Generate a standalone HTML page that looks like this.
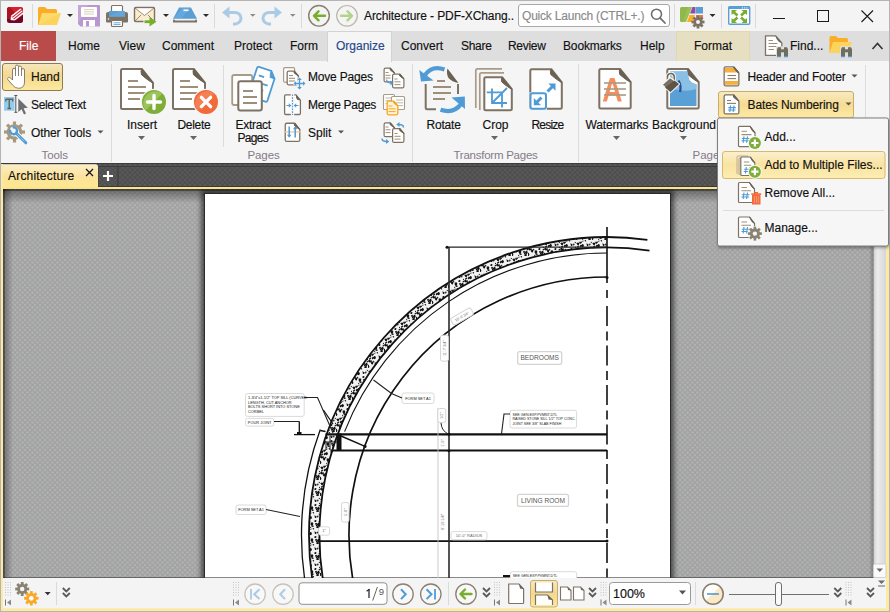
<!DOCTYPE html>
<html><head><meta charset="utf-8">
<style>
*{box-sizing:border-box;margin:0;padding:0}
html,body{width:890px;height:612px;overflow:hidden;background:#f4f4f4}
body{position:relative;font-family:"Liberation Sans",sans-serif;font-size:12px;color:#111}
.a{position:absolute}
.t{position:absolute;white-space:nowrap;line-height:14px;-webkit-text-stroke:0.15px currentColor}
.lbl{color:#837b88;font-size:11.5px;-webkit-text-stroke:0}
</style></head>
<body>
<div class="a" style="left:0;top:0;width:890px;height:31px;background:#f4f4f4"></div>
<div class="a" style="left:0;top:31px;width:890px;height:30px;background:#dedede"></div>
<div class="a" style="left:0;top:61px;width:890px;height:102px;background:#f5f5f5"></div>
<div class="a" style="left:1px;top:31px;width:55px;height:30px;background:#b94c4a"></div>
<div class="a" style="left:327px;top:31px;width:65px;height:31px;background:#f5f5f5;border-radius:2px 2px 0 0;border:1px solid #d2d2d2;border-bottom:none"></div>
<div class="a" style="left:676px;top:31px;width:74px;height:30px;background:#e6dfc2;border:1px solid #e2d8ab;border-bottom:none"></div>
<div class="a" style="left:518px;top:4px;width:152px;height:23px;border:1px solid #a9a9a9;border-radius:3px;background:#fff"></div>
<!-- ===== TITLE BAR ICONS ===== -->
<svg class="a" style="left:0;top:0" width="890" height="31" viewBox="0 0 890 31">
 <!-- logo -->
 <rect x="7" y="7" width="16" height="16" rx="2.5" fill="#6e0824"/>
 <path d="M9.5,7 H20.5 Q23,7 23,9.5 V15 L16,20 L9,16 Z" fill="#d9202e"/>
 <path d="M7,9.5 Q7,7 9.5,7 L16,14 L10,19 L7,19 Z" fill="#a8141f"/>
 <g transform="translate(10.5,20) rotate(-38)">
  <rect x="3" y="-3" width="12" height="6" fill="#fff"/>
  <rect x="3" y="-1.6" width="12" height="1.1" fill="#c42030"/>
  <rect x="3" y="0.6" width="12" height="1.1" fill="#c42030"/>
  <path d="M0,0 L3,-3 V3 Z" fill="#fff"/>
 </g>
 <rect x="32" y="4" width="1" height="24" fill="#dadada"/>
 <!-- folder -->
 <path d="M38,8.5 Q38,7 39.5,7 H45 L47,9 H55.5 Q57,9 57,10.5 V25 H38 Z" fill="#f8ae27"/>
 <path d="M42,13 H61 L57,25 H38.5 Z" fill="#fdd45b"/>
 <path d="M38.5,25 L42,13 H61 L38.5,25 Z" fill="#fedd77" opacity="0.6"/>
 <path d="M67,14 h6 l-3,3 z" fill="#2b2b2b"/>
 <!-- floppy -->
 <path d="M78,5 H99 Q100,5 100,6 V26.5 H80.5 L78,24 Z" fill="#b998d0"/>
 <path d="M78,5 H88 L78,24 Z" fill="#c6addb" opacity="0.7"/>
 <rect x="81" y="7" width="16" height="10" rx="1" fill="#fff"/>
 <path d="M84,9.6 H94 M84,11.8 H94 M84,14 H94" stroke="#d8c8b0" stroke-width="0.9"/>
 <rect x="83" y="20" width="12" height="6.5" fill="#fff"/>
 <rect x="86" y="21" width="3" height="5.5" fill="#b998d0"/>
 <!-- printer -->
 <rect x="111.5" y="5.5" width="11" height="7" rx="1" fill="#fff" stroke="#7d7264" stroke-width="1.2"/>
 <path d="M108,12 H126 Q128,12 128,14 V21.5 Q128,22.5 127,22.5 H107 Q106,22.5 106,21.5 V14 Q106,12 108,12 Z" fill="#7d7264"/>
 <rect x="109" y="11" width="16" height="5.8" fill="#5a9fd4"/>
 <path d="M109,16.8 L119,11 H125 V16.8 Z" fill="#6cb0e0" opacity="0.5"/>
 <circle cx="108.5" cy="19" r="0.8" fill="#fff"/>
 <rect x="111.5" y="20.5" width="11" height="6" rx="1" fill="#fff" stroke="#7d7264" stroke-width="1.2"/>
 <path d="M113.5,22.8 H120.5 M113.5,24.6 H120.5" stroke="#5a9fd4" stroke-width="0.9"/>
 <!-- envelope -->
 <rect x="134.5" y="7.5" width="20" height="14" rx="1.2" fill="#fbeccc" stroke="#7d7264" stroke-width="1.4"/>
 <path d="M135.5,8.5 L144.5,15.5 L153.5,8.5 Z" fill="#fff"/>
 <path d="M135,8 L144.5,15.5 L154,8 M135,21 L141,15 M154,21 L148,15" stroke="#7d7264" stroke-width="0.8" fill="none"/>
 <path d="M143.5,21.7 H151" stroke="#f4f4f4" stroke-width="5"/><path d="M144.5,21.7 H151" stroke="#78ad2e" stroke-width="2.8"/><path d="M149.5,17 L156.5,21.7 L149.5,26.4 Z" fill="#78ad2e"/>
 <path d="M163,14 h6 l-3,3 z" fill="#2b2b2b"/>
 <!-- scanner -->
 <path d="M179,7.5 H191 L197,18.8 H173 Z" fill="#5a9fd4"/>
 <path d="M173,18.8 L183,7.5 H191 L181,18.8 Z" fill="#7dbbe8" opacity="0.35"/>
 <rect x="183.5" y="9.5" width="5" height="1.6" fill="#fff"/>
 <path d="M174,20.5 V21.5 H196 V20.5" stroke="#7d7264" stroke-width="2" fill="none" stroke-linecap="round"/>
 <path d="M203,14 h6 l-3,3 z" fill="#2b2b2b"/>
 <rect x="214" y="4" width="1" height="24" fill="#dadada"/>
 <!-- undo / redo -->
 <path d="M226,12.5 H235 A6,5.7 0 0 1 235,23.9 H233" stroke="#a9cbe6" stroke-width="3" fill="none"/>
 <path d="M222,12.5 L229.5,6.5 V18.5 Z" fill="#a9cbe6"/>
 <path d="M250,14 h5.5 l-2.75,2.75 z" fill="#8a8a8a"/>
 <path d="M278,12.5 H269 A6,5.7 0 0 0 269,23.9 H271" stroke="#a9cbe6" stroke-width="3" fill="none"/>
 <path d="M282,12.5 L274.5,6.5 V18.5 Z" fill="#a9cbe6"/>
 <path d="M290,14 h5.5 l-2.75,2.75 z" fill="#8a8a8a"/>
 <rect x="301" y="4" width="1" height="24" fill="#dadada"/>
 <!-- back / fwd -->
 <circle cx="319" cy="15.8" r="10.3" fill="none" stroke="#8a7f70" stroke-width="1.4"/>
 <path d="M314,15.8 H325 M318.5,11.3 L314,15.8 L318.5,20.3" stroke="#78ad2e" stroke-width="2.4" fill="none" stroke-linecap="round" stroke-linejoin="round"/>
 <circle cx="347" cy="15.8" r="10.3" fill="none" stroke="#bdb5aa" stroke-width="1.2"/>
 <path d="M341,15.8 H352 M347.5,11.3 L352,15.8 L347.5,20.3" stroke="#b3d28f" stroke-width="2.4" fill="none" stroke-linecap="round" stroke-linejoin="round"/>
 <!-- search -->
 <circle cx="656.5" cy="14.2" r="5" fill="none" stroke="#6e6e6e" stroke-width="1.6"/>
 <path d="M660,17.8 L665,23" stroke="#6e6e6e" stroke-width="1.8" stroke-linecap="round"/>
 <rect x="674" y="4" width="1" height="24" fill="#dadada"/>
 <!-- colorful -->
 <path d="M681.5,7 H692 L686,22 H681.5 Q680,22 680,20.5 V8.5 Q680,7 681.5,7 Z" fill="#8fba4b"/>
 <path d="M686,22 L692,7 H688 L683,22 Z" fill="#a4c862" opacity="0.5"/>
 <path d="M692.5,7 H695.5 V13.5 H690 Z" fill="#8a4ca8"/>
 <rect x="696" y="7" width="7" height="6.5" fill="#5a9fd4"/>
 <path d="M689.5,15 H695 L692,22 H687 Z" fill="#f8ae27"/>
 <rect x="696" y="15" width="7" height="3" fill="#f07a4a"/>
 <g transform="translate(698,22)" fill="#7d7264">
  <circle r="4.6"/>
  <rect x="-1.4" y="-6.5" width="2.8" height="13" />
  <rect x="-1.4" y="-6.5" width="2.8" height="13" transform="rotate(45)"/>
  <rect x="-1.4" y="-6.5" width="2.8" height="13" transform="rotate(90)"/>
  <rect x="-1.4" y="-6.5" width="2.8" height="13" transform="rotate(135)"/>
  <circle r="2" fill="#f4f4f4"/>
 </g>
 <path d="M709.5,14 h6 l-3,3 z" fill="#2b2b2b"/>
 <rect x="721" y="4" width="1" height="24" fill="#dadada"/>
 <!-- fullscreen -->
 <rect x="728.7" y="6.7" width="21" height="17.5" rx="1" fill="#fff" stroke="#5a9fd4" stroke-width="1.4"/>
 <rect x="728.7" y="6.7" width="21" height="2.3" fill="#5a9fd4"/>
 <circle cx="742.5" cy="7.9" r="0.6" fill="#fff"/><circle cx="744.7" cy="7.9" r="0.6" fill="#fff"/><circle cx="746.9" cy="7.9" r="0.6" fill="#fff"/>
 <g stroke="#78ad2e" stroke-width="2.6" fill="none">
  <path d="M733.5,12 L737.5,15.5 M745,12 L741,15.5 M733.5,21 L737.5,17.5 M745,21 L741,17.5"/>
 </g>
 <g fill="#78ad2e">
  <path d="M731.5,10 H737 L731.5,15 Z"/><path d="M747,10 H741.5 L747,15 Z"/>
  <path d="M731.5,23 H737 L731.5,18 Z"/><path d="M747,23 H741.5 L747,18 Z"/>
 </g>
 <rect x="755" y="4" width="1" height="24" fill="#dadada"/>
 <!-- window controls -->
 <rect x="773" y="18" width="12" height="1" fill="#1a1a1a"/>
 <rect x="817.5" y="10.5" width="11" height="11" fill="none" stroke="#1a1a1a" stroke-width="1"/>
 <path d="M861.5,10.5 L873,22 M873,10.5 L861.5,22" stroke="#1a1a1a" stroke-width="1.1"/>
</svg>
<svg class="a" style="left:750px;top:31px" width="140" height="30" viewBox="750 31 140 30">
<path d="M765.5,35.8 H775.5 L781.8,43 V55.3 H765.5 Z" fill="#fff" stroke="#7d7264" stroke-width="1.3" stroke-linejoin="round"/>
<path d="M775.5,35.8 L781.8,43 Q777,42 775.5,35.8 Z" fill="#6b6152"/>
<path d="M768.5,40.5 H773 M768.5,43.5 H777.5 M768.5,46.5 H776 M768.5,49.5 H774" stroke="#9e8f78" stroke-width="1.1"/>
<rect x="776" y="46.3" width="13" height="11" fill="#dedede"/><path d="M777,49.3 L778,47.3 H781 V56.3 H777 Z M788,49.3 L787,47.3 H784 V56.3 H788 Z" fill="#6e6e5e"/><rect x="781" y="49.3" width="3" height="3" fill="#6e6e5e"/><path d="M777,56.599999999999994 H781 M784,56.599999999999994 H788" stroke="#4e9bd6" stroke-width="1.2"/>
<path d="M829.5,37.5 Q829.5,36 831,36 H836 L838,38 H846.5 Q848,38 848,39.5 V53 H829.5 Z" fill="#f8ae27"/>
<path d="M833,42 H852 L848,53 H829.5 Z" fill="#fdd45b"/>
<rect x="840" y="46.3" width="13" height="11" fill="#dedede"/><path d="M841,49.3 L842,47.3 H845 V56.3 H841 Z M852,49.3 L851,47.3 H848 V56.3 H852 Z" fill="#6e6e5e"/><rect x="845" y="49.3" width="3" height="3" fill="#6e6e5e"/><path d="M841,56.599999999999994 H845 M848,56.599999999999994 H852" stroke="#4e9bd6" stroke-width="1.2"/>
<path d="M872.5,49 L877.5,43.5 L882.5,49" fill="none" stroke="#333" stroke-width="1.6"/>
</svg>
<svg class="a" style="left:0;top:61px" width="890" height="102" viewBox="0 61 890 102">
<defs><linearGradient id="gsel" x1="0" y1="0" x2="0" y2="1"><stop offset="0" stop-color="#f6e8bf"/><stop offset="0.45" stop-color="#f3d98f"/><stop offset="1" stop-color="#fde9a0"/></linearGradient><linearGradient id="gsel2" x1="0" y1="0" x2="0" y2="1"><stop offset="0" stop-color="#f8ebc4"/><stop offset="0.5" stop-color="#f5dc94"/><stop offset="1" stop-color="#feeaa6"/></linearGradient></defs>
<rect x="2.5" y="63.5" width="60" height="27" rx="2.5" fill="url(#gsel)" stroke="#8f7c4c" stroke-width="1"/>
<path d="M12.5,80 V70 Q12.5,68.3 14,68.3 Q15.5,68.3 15.5,70 V66.5 Q15.5,65 17,65 Q18.5,65 18.5,66.5 V67.5 Q18.5,66 20,66 Q21.5,66 21.5,67.5 V70 Q21.5,68.6 23,68.6 Q24.5,68.6 24.5,70 V82 Q24.5,88.3 18.5,88.3 Q15,88.3 12.5,85 L7.8,79.5 Q7,78.3 8.3,77.6 Q9.5,77 10.7,78.2 Z" fill="#fff" stroke="#7d7264" stroke-width="0.9" stroke-linejoin="round"/>
<path d="M15.5,70 V76 M18.5,67.5 V76 M21.5,70 V76" stroke="#7d7264" stroke-width="0.9"/>
<rect x="4" y="97" width="10.5" height="13.7" fill="#8fcdf0"/>
<path d="M5.8,99.3 H12.7 V101.6 M5.8,99.3 V101.6 M9.25,99.3 V108.5 M7.5,108.5 H11" stroke="#6b6152" stroke-width="1.4" fill="none"/>
<path d="M15.8,95.5 V112.3 M14.3,95.5 H17.3 M14.3,112.3 H17.3" stroke="#555" stroke-width="1"/>
<path d="M18.3,98.5 L27.8,107.8 L23.6,108.2 L26,113.5 L24,114.6 L21.6,109.3 L18.3,112 Z" fill="#6e6e6e"/>
<g transform="translate(14.5,132)" fill="#a89880"><rect x="-1.6" y="-10.5" width="3.2" height="4" transform="rotate(0)"/><rect x="-1.6" y="-10.5" width="3.2" height="4" transform="rotate(45)"/><rect x="-1.6" y="-10.5" width="3.2" height="4" transform="rotate(90)"/><rect x="-1.6" y="-10.5" width="3.2" height="4" transform="rotate(135)"/><rect x="-1.6" y="-10.5" width="3.2" height="4" transform="rotate(180)"/><rect x="-1.6" y="-10.5" width="3.2" height="4" transform="rotate(225)"/><rect x="-1.6" y="-10.5" width="3.2" height="4" transform="rotate(270)"/><rect x="-1.6" y="-10.5" width="3.2" height="4" transform="rotate(315)"/><circle r="7.8"/><circle r="4.6" fill="#f5f5f5"/></g>
<path d="M15.5,132.5 L26,143" stroke="#f5f5f5" stroke-width="5" stroke-linecap="round"/>
<path d="M15.5,132.5 L25.8,142.8" stroke="#4e9bd6" stroke-width="3" stroke-linecap="round"/>
<path d="M16.5,133.5 L25,142" stroke="#d5e8f7" stroke-width="0.9" stroke-dasharray="1,1"/>
<circle cx="13.8" cy="130.8" r="4.3" fill="#f5f5f5"/>
<path d="M10.2,129.5 A3.5,3.5 0 1 0 12.6,127.3" fill="none" stroke="#4e9bd6" stroke-width="2.4"/>
<path d="M97.5,130.4 H103.5 L100.5,133.6 Z" fill="#555"/>
<rect x="111" y="64" width="1" height="98" fill="#dcdcdc"/>
<path d="M122.5,69.0 H142.0 L153.0,82.85 V107.5 Q153.0,109.0 151.5,109.0 H122.5 Q121.0,109.0 121.0,107.5 V70.5 Q121.0,69.0 122.5,69.0 Z" fill="#fff" stroke="#7d7264" stroke-width="2" stroke-linejoin="round"/><path d="M142.0,69.0 L153.0,82.85 Q149.05,81.36500000000001 141.45,74.6825 Q140.35,70.2275 142.0,69.0 Z" fill="#6b6152" stroke="#6b6152" stroke-width="1" stroke-linejoin="round"/>
<path d="M128,81 H138" stroke="#9e8f78" stroke-width="2"/><path d="M128,87 H146" stroke="#9e8f78" stroke-width="2"/><path d="M128,93 H146" stroke="#9e8f78" stroke-width="2"/><path d="M128,99 H140" stroke="#9e8f78" stroke-width="2"/>
<circle cx="154" cy="102" r="13.2" fill="#f5f5f5"/><circle cx="154" cy="102" r="12" fill="#7fae38"/><path d="M145.6,110.4 A12,12 0 0 1 162.4,93.6 Z" fill="#9cc35c"/><path d="M147.5,102 H160.5 M154,95.5 V108.5" stroke="#fff" stroke-width="3.4" stroke-linecap="round"/>
<path d="M138.0,136.1 H145.0 L141.5,139.9 Z" fill="#666"/>
<path d="M174.5,69.0 H194.0 L205.0,82.85 V107.5 Q205.0,109.0 203.5,109.0 H174.5 Q173.0,109.0 173.0,107.5 V70.5 Q173.0,69.0 174.5,69.0 Z" fill="#fff" stroke="#7d7264" stroke-width="2" stroke-linejoin="round"/><path d="M194.0,69.0 L205.0,82.85 Q201.05,81.36500000000001 193.45,74.6825 Q192.35,70.2275 194.0,69.0 Z" fill="#6b6152" stroke="#6b6152" stroke-width="1" stroke-linejoin="round"/>
<path d="M180,81 H190" stroke="#9e8f78" stroke-width="2"/><path d="M180,87 H198" stroke="#9e8f78" stroke-width="2"/><path d="M180,93 H198" stroke="#9e8f78" stroke-width="2"/><path d="M180,99 H192" stroke="#9e8f78" stroke-width="2"/>
<circle cx="206" cy="102" r="13.2" fill="#f5f5f5"/><circle cx="206" cy="102" r="12" fill="#f06a3a"/><path d="M197.6,110.4 A12,12 0 0 1 214.4,93.6 Z" fill="#f47f52"/><path d="M201.4,97.4 L210.6,106.6 M210.6,97.4 L201.4,106.6" stroke="#fff" stroke-width="3.4" stroke-linecap="round"/>
<path d="M190.0,136.1 H197.0 L193.5,139.9 Z" fill="#666"/>
<rect x="223" y="65" width="1" height="82" fill="#dcdcdc"/>
<rect x="232.2" y="75" width="20" height="30" rx="2" fill="#fff" stroke="#a89c88" stroke-width="1.8"/>
<g transform="translate(257.5,66.5) rotate(18)"><path d="M1.5,0 H14.5 L20,6.5 V29.5 Q20,31 18.5,31 H1.5 Q0,31 0,29.5 V1.5 Q0,0 1.5,0 Z" fill="#fff" stroke="#4e9bd6" stroke-width="1.8"/><path d="M14.5,0 L20,6.5 L15.5,6.5 Q14,4 14.5,0 Z" fill="#4e9bd6" stroke="#4e9bd6" stroke-width="1"/><path d="M4,8 H9.5 M4,15 H15.5 M4,21.5 H13" stroke="#4e9bd6" stroke-width="1.8"/></g>
<rect x="238.3" y="81.3" width="23.5" height="29.2" rx="2.2" fill="#fff" stroke="#7d7264" stroke-width="2"/>
<path d="M243,91 H253" stroke="#9e8f78" stroke-width="2"/><path d="M243,97 H257" stroke="#9e8f78" stroke-width="2"/><path d="M243,103 H257" stroke="#9e8f78" stroke-width="2"/>
<rect x="283.6" y="67.6" width="11" height="14.5" rx="1.2" fill="#fff" stroke="#a89c88" stroke-width="1.2"/>
<path d="M288.65,71.15 H294.35 L298.35,75.9 V83.35 Q298.35,84.85 296.85,84.85 H288.65 Q287.15,84.85 287.15,83.35 V72.65 Q287.15,71.15 288.65,71.15 Z" fill="#fff" stroke="#7d7264" stroke-width="1.3" stroke-linejoin="round"/><path d="M294.35,71.15 L298.35,75.9 Q297.2,75.36 294.15000000000003,72.93 Q293.75,71.31 294.35,71.15 Z" fill="#6b6152" stroke="#6b6152" stroke-width="1" stroke-linejoin="round"/>
<path d="M289,75.5 H293" stroke="#9e8f78" stroke-width="1.1"/><path d="M289,78.3 H295" stroke="#9e8f78" stroke-width="1.1"/><path d="M289,81 H295" stroke="#9e8f78" stroke-width="1.1"/>
<path d="M293.5,83.5 H305.5 M299.5,77.5 V89.5" stroke="#f5f5f5" stroke-width="3.4"/>
<path d="M294.5,83.5 H304.5 M299.5,78.5 V88.5" stroke="#4e9bd6" stroke-width="1.3"/>
<path d="M293.6,83.5 L296,81.2 V85.8 Z M305.4,83.5 L303,81.2 V85.8 Z M299.5,77.6 L297.2,80 H301.8 Z M299.5,89.4 L297.2,87 H301.8 Z" fill="#4e9bd6"/>
<path d="M290.8,94.8 H285.8 Q284.6,94.8 284.6,96 V113.3 Q284.6,114.5 285.8,114.5 H290.8 M294.2,94.8 H296 L300.4,100.3 V113.3 Q300.4,114.5 299.2,114.5 H294.2" fill="#fff" stroke="#7d7264" stroke-width="1.3"/>
<path d="M296,94.8 L300.4,100.3 L297.5,100 Q295.5,98.5 296,94.8 Z" fill="#6b6152"/>
<path d="M292.5,94.5 V115" stroke="#4e9bd6" stroke-width="1.1" stroke-dasharray="1.6,1.2"/>
<path d="M286.5,105.5 H290.5 M294.5,105.5 H298.5" stroke="#4e9bd6" stroke-width="1.2"/><path d="M291.3,105.5 L288.8,103.3 V107.7 Z M293.7,105.5 L296.2,103.3 V107.7 Z" fill="#4e9bd6"/>
<path d="M286.75,123.25 H294.75000000000006 L299.75000000000006,129.35 V139.95 Q299.75000000000006,141.45 298.25000000000006,141.45 H286.75 Q285.25,141.45 285.25,139.95 V124.75 Q285.25,123.25 286.75,123.25 Z" fill="#fff" stroke="#7d7264" stroke-width="1.3" stroke-linejoin="round"/><path d="M294.75000000000006,123.25 L299.75000000000006,129.35 Q298.15000000000003,128.67499999999998 294.50000000000006,125.63749999999999 Q294.00000000000006,123.6125 294.75000000000006,123.25 Z" fill="#6b6152" stroke="#6b6152" stroke-width="1" stroke-linejoin="round"/>
<path d="M284.6,131.9 H300.4" stroke="#f0c890" stroke-width="1.3"/>
<path d="M289.2,126.5 V136.5 M295.2,127.5 V137.5" stroke="#4e9bd6" stroke-width="1.5"/><path d="M289.2,137.8 L287,134.8 H291.4 Z M295.2,126.2 L293,129.2 H297.4 Z" fill="#4e9bd6"/>
<path d="M338.0,130.4 H344.0 L341,133.6 Z" fill="#555"/>
<path d="M385.6,68.1 H390.4 L394.4,72.9 V80.4 Q394.4,81.9 392.9,81.9 H385.6 Q384.1,81.9 384.1,80.4 V69.6 Q384.1,68.1 385.6,68.1 Z" fill="#fff" stroke="#7d7264" stroke-width="1.2" stroke-linejoin="round"/><path d="M390.4,68.1 L394.4,72.9 Q393.2,72.36 390.2,69.93 Q389.79999999999995,68.31 390.4,68.1 Z" fill="#6b6152" stroke="#6b6152" stroke-width="1" stroke-linejoin="round"/>
<path d="M385.5,72.5 H388.5" stroke="#9e8f78" stroke-width="1"/><path d="M385.5,75.3 H390.5" stroke="#9e8f78" stroke-width="1"/><path d="M385.5,78 H390.5" stroke="#9e8f78" stroke-width="1"/>
<path d="M394.1,74.1 H399.9 L403.9,78.9 V86.4 Q403.9,87.9 402.4,87.9 H394.1 Q392.6,87.9 392.6,86.4 V75.6 Q392.6,74.1 394.1,74.1 Z" fill="#fff" stroke="#7d7264" stroke-width="1.2" stroke-linejoin="round"/><path d="M399.9,74.1 L403.9,78.9 Q402.7,78.36 399.7,75.93 Q399.29999999999995,74.31 399.9,74.1 Z" fill="#6b6152" stroke="#6b6152" stroke-width="1" stroke-linejoin="round"/>
<path d="M394.5,79 H397.5" stroke="#9e8f78" stroke-width="1"/><path d="M394.5,81.8 H400.5" stroke="#9e8f78" stroke-width="1"/><path d="M394.5,84.6 H400.5" stroke="#9e8f78" stroke-width="1"/>
<path d="M386.5,79.5 Q387,83 391,83" stroke="#4e9bd6" stroke-width="1.4" fill="none"/><path d="M393.5,83 L390.5,80.6 V85.4 Z" fill="#4e9bd6"/>
<rect x="383.5" y="94.5" width="11" height="15" rx="1" fill="#fff" stroke="#a89c88" stroke-width="1.1"/>
<path d="M385.5,98 H392.5" stroke="#b8ab98" stroke-width="0.9"/><path d="M385.5,100.8 H392.5" stroke="#b8ab98" stroke-width="0.9"/><path d="M385.5,103.6 H392.5" stroke="#b8ab98" stroke-width="0.9"/>
<rect x="391.5" y="96.5" width="13" height="13" rx="1" fill="#fff" stroke="#a89c88" stroke-width="1.1"/>
<path d="M396,100 H403" stroke="#b8ab98" stroke-width="0.9"/><path d="M396,102.8 H403" stroke="#b8ab98" stroke-width="0.9"/><path d="M396,105.6 H403" stroke="#b8ab98" stroke-width="0.9"/>
<path d="M388.65,101.15 H393.85 L397.85,105.9 V113.35 Q397.85,114.85 396.35,114.85 H388.65 Q387.15,114.85 387.15,113.35 V102.65 Q387.15,101.15 388.65,101.15 Z" fill="#fff3d8" stroke="#f8a51f" stroke-width="1.3" stroke-linejoin="round"/><path d="M393.85,101.15 L397.85,105.9 Q396.7,105.36 393.65000000000003,102.93 Q393.25,101.31 393.85,101.15 Z" fill="#f8a51f" stroke="#f8a51f" stroke-width="1" stroke-linejoin="round"/>
<path d="M388.5,106 H392.5" stroke="#f8a51f" stroke-width="1"/><path d="M388.5,108.8 H395.5" stroke="#f8a51f" stroke-width="1"/><path d="M388.5,111.6 H395.5" stroke="#f8a51f" stroke-width="1"/>
<path d="M385.6,122.89999999999999 H390.4 L394.4,127.7 V135.20000000000002 Q394.4,136.70000000000002 392.9,136.70000000000002 H385.6 Q384.1,136.70000000000002 384.1,135.20000000000002 V124.39999999999999 Q384.1,122.89999999999999 385.6,122.89999999999999 Z" fill="#fff" stroke="#7d7264" stroke-width="1.2" stroke-linejoin="round"/><path d="M390.4,122.89999999999999 L394.4,127.7 Q393.2,127.16 390.2,124.73 Q389.79999999999995,123.11 390.4,122.89999999999999 Z" fill="#6b6152" stroke="#6b6152" stroke-width="1" stroke-linejoin="round"/>
<path d="M385.5,127 H388.5" stroke="#9e8f78" stroke-width="1"/><path d="M385.5,129.8 H390.5" stroke="#9e8f78" stroke-width="1"/><path d="M385.5,132.6 H390.5" stroke="#9e8f78" stroke-width="1"/>
<path d="M394.1,128.6 H399.9 L403.9,133.4 V140.9 Q403.9,142.4 402.4,142.4 H394.1 Q392.6,142.4 392.6,140.9 V130.1 Q392.6,128.6 394.1,128.6 Z" fill="#fff" stroke="#7d7264" stroke-width="1.2" stroke-linejoin="round"/><path d="M399.9,128.6 L403.9,133.4 Q402.7,132.86 399.7,130.43 Q399.29999999999995,128.81 399.9,128.6 Z" fill="#6b6152" stroke="#6b6152" stroke-width="1" stroke-linejoin="round"/>
<path d="M394.5,133.5 H397.5" stroke="#9e8f78" stroke-width="1"/><path d="M394.5,136.3 H400.5" stroke="#9e8f78" stroke-width="1"/><path d="M394.5,139.1 H400.5" stroke="#9e8f78" stroke-width="1"/>
<path d="M403.5,127.5 Q403.5,124.5 399,124.5" stroke="#4e9bd6" stroke-width="1.5" fill="none"/><path d="M396.3,124.5 L399.5,122 V127 Z" fill="#4e9bd6"/>
<path d="M382,138.5 Q382,141.5 386.5,141.5" stroke="#4e9bd6" stroke-width="1.5" fill="none"/><path d="M389.3,141.5 L386,139 V144 Z" fill="#4e9bd6"/>
<rect x="412" y="64" width="1" height="98" fill="#dcdcdc"/>
<path d="M436,109.2 H427 Q425.7,109.2 425.7,108 V84" stroke="#7d7264" stroke-width="2" fill="none"/>
<path d="M458,84 V94" stroke="#7d7264" stroke-width="2" fill="none"/>
<path d="M447.5,68.5 L458.5,83 Q452,82 448.5,78 Q446,73 447.5,68.5 Z" fill="#6b6152"/>
<path d="M437,81 H445" stroke="#9e8f78" stroke-width="2"/>
<path d="M433,87 H451" stroke="#9e8f78" stroke-width="2"/><path d="M433,93 H451" stroke="#9e8f78" stroke-width="2"/><path d="M433,99 H445" stroke="#9e8f78" stroke-width="2"/>
<path d="M444.5,69.5 Q432,65 425,75" stroke="#4e9bd6" stroke-width="4.2" fill="none"/>
<path d="M419.3,70 L421,81.5 L433.5,80.5 Z" fill="#4e9bd6"/>
<path d="M440.5,109.8 Q454,114 461,104" stroke="#4e9bd6" stroke-width="4.2" fill="none"/>
<path d="M464.8,96.5 L465,109 L451.5,97.5 Z" fill="#4e9bd6"/>
<path d="M475.8,108 V70.5 Q475.8,68.8 477.5,68.8 H502" stroke="#a89c88" stroke-width="1.7" fill="none"/>
<path d="M479.8,110 V74.5 Q479.8,72.8 481.5,72.8 H504" stroke="#a89c88" stroke-width="1.7" fill="none"/>
<path d="M485.8,77.3 H502.29999999999995 L511.79999999999995,89.125 V108.8 Q511.79999999999995,110.3 510.29999999999995,110.3 H485.8 Q484.3,110.3 484.3,108.8 V78.8 Q484.3,77.3 485.8,77.3 Z" fill="#fff" stroke="#7d7264" stroke-width="2" stroke-linejoin="round"/><path d="M502.29999999999995,77.3 L511.79999999999995,89.125 Q508.525,87.8425 501.82499999999993,82.07124999999999 Q500.87499999999994,78.22375 502.29999999999995,77.3 Z" fill="#6b6152" stroke="#6b6152" stroke-width="1" stroke-linejoin="round"/>
<path d="M492,88.5 V103 H507 M486.8,92.3 H502 V107.5 M492,103 L507,88" stroke="#4e9bd6" stroke-width="1.8" fill="none"/>
<path d="M531.8,69.2 H551.3 L561.8,82.375 V107.30000000000001 Q561.8,108.80000000000001 560.3,108.80000000000001 H531.8 Q530.3,108.80000000000001 530.3,107.30000000000001 V70.7 Q530.3,69.2 531.8,69.2 Z" fill="#fff" stroke="#7d7264" stroke-width="2" stroke-linejoin="round"/><path d="M551.3,69.2 L561.8,82.375 Q558.0749999999999,80.95750000000001 550.775,74.57875 Q549.7249999999999,70.32625 551.3,69.2 Z" fill="#6b6152" stroke="#6b6152" stroke-width="1" stroke-linejoin="round"/>
<rect x="529.5" y="92.3" width="17.5" height="17.5" fill="#f5f5f5"/>
<rect x="530.5" y="93.3" width="15.5" height="15.5" rx="2" fill="#fff" stroke="#4e9bd6" stroke-width="2"/>
<path d="M541.5,97.5 L536.5,102.5" stroke="#4e9bd6" stroke-width="3"/><path d="M533.8,105.2 V98 L541,105.2 Z" fill="#4e9bd6"/>
<path d="M547.5,91.5 L552.5,86.5" stroke="#4e9bd6" stroke-width="3"/><path d="M555.5,83.5 V90.7 L548.3,83.5 Z" fill="#4e9bd6"/>
<rect x="578" y="64" width="1" height="98" fill="#dcdcdc"/>
<path d="M600.8,69.0 H620.1999999999999 L630.6999999999999,82.175 V107.1 Q630.6999999999999,108.6 629.1999999999999,108.6 H600.8 Q599.3,108.6 599.3,107.1 V70.5 Q599.3,69.0 600.8,69.0 Z" fill="#fff" stroke="#7d7264" stroke-width="2" stroke-linejoin="round"/><path d="M620.1999999999999,69.0 L630.6999999999999,82.175 Q626.9749999999999,80.7575 619.675,74.37875 Q618.6249999999999,70.12625 620.1999999999999,69.0 Z" fill="#6b6152" stroke="#6b6152" stroke-width="1" stroke-linejoin="round"/>
<path d="M602.8,101.5 L610,78 H614.5 L621.8,101.5 H617.8 L616,95.5 H608.7 L606.8,101.5 Z M609.6,92 H615 L612.3,82.5 Z" fill="#f78d5d"/>
<path d="M604,83 H626" stroke="#a89a82" stroke-width="1.6"/><path d="M604,89 H626" stroke="#a89a82" stroke-width="1.6"/><path d="M604,95 H626" stroke="#a89a82" stroke-width="1.6"/>
<path d="M668.8,69.0 H688.1999999999999 L698.6999999999999,82.175 V107.1 Q698.6999999999999,108.6 697.1999999999999,108.6 H668.8 Q667.3,108.6 667.3,107.1 V70.5 Q667.3,69.0 668.8,69.0 Z" fill="#fff" stroke="#7d7264" stroke-width="2" stroke-linejoin="round"/><path d="M688.1999999999999,69.0 L698.6999999999999,82.175 Q694.9749999999999,80.7575 687.675,74.37875 Q686.6249999999999,70.12625 688.1999999999999,69.0 Z" fill="#6b6152" stroke="#6b6152" stroke-width="1" stroke-linejoin="round"/>
<path d="M670,71.5 H687.5 Q688,77 689.5,80.5 Q692.5,84 696.5,84.5 V106 H670 Z" fill="#5aa0d6"/>
<path d="M670,71.5 H687.5 Q688,77 689.5,80.5 Q692.5,84 696.5,84.5 V89 Q685,93 670,88 Z" fill="#8ac0e6"/>
<path d="M678.5,80.5 Q681.5,85 680,92" stroke="#2c4f8a" stroke-width="2.2" fill="none"/>
<path d="M667.5,79.5 Q666.5,73 671.5,73.5 Q676,74.5 673.5,82" stroke="#f5f5f5" stroke-width="3.4" fill="none"/>
<path d="M667.5,79.5 Q666.5,73 671.5,73.5 Q676,74.5 673.5,82" stroke="#6e6454" stroke-width="1.6" fill="none"/>
<path d="M662,84.8 L670,77.5 L679.5,84 L670.5,92.5 Z" fill="#7a705f" stroke="#f5f5f5" stroke-width="1.4" stroke-linejoin="round"/>
<path d="M665,87.5 L674.5,80.5 L679,84 L670.5,92 Z" fill="#5e5546"/>
<path d="M613.0,136.1 H620.0 L616.5,139.9 Z" fill="#666"/>
<path d="M680.0,136.1 H687.0 L683.5,139.9 Z" fill="#666"/>
<path d="M725.65,66.95 H733.85 L738.85,73.05 V84.44999999999999 Q738.85,85.94999999999999 737.35,85.94999999999999 H725.65 Q724.15,85.94999999999999 724.15,84.44999999999999 V68.45 Q724.15,66.95 725.65,66.95 Z" fill="#fff" stroke="#7d7264" stroke-width="1.3" stroke-linejoin="round"/><path d="M733.85,66.95 L738.85,73.05 Q737.25,72.375 733.6,69.33749999999999 Q733.1,67.3125 733.85,66.95 Z" fill="#6b6152" stroke="#6b6152" stroke-width="1" stroke-linejoin="round"/>
<path d="M725,68 H733.5 L736.5,72.4 H725 Z" fill="#f8ae3a"/><rect x="725" y="81" width="13.2" height="3.8" fill="#f8ae3a"/><path d="M734.5,67 L739.5,72.5 Q735.5,72 734.5,67 Z" fill="#6b6152"/>
<path d="M727.5,75.5 H736.0" stroke="#8a7d6a" stroke-width="1.1"/><path d="M727.5,78.6 H736.0" stroke="#8a7d6a" stroke-width="1.1"/>
<path d="M851.5,74.4 H857.5 L854.5,77.6 Z" fill="#555"/>
<rect x="718.5" y="91.5" width="135" height="26.5" rx="2.5" fill="url(#gsel2)" stroke="#c9ad62" stroke-width="1"/>
<path d="M725.65,94.95 H733.85 L738.85,101.05 V112.44999999999999 Q738.85,113.94999999999999 737.35,113.94999999999999 H725.65 Q724.15,113.94999999999999 724.15,112.44999999999999 V96.45 Q724.15,94.95 725.65,94.95 Z" fill="#fff" stroke="#7d7264" stroke-width="1.3" stroke-linejoin="round"/><path d="M733.85,94.95 L738.85,101.05 Q737.25,100.375 733.6,97.33749999999999 Q733.1,95.3125 733.85,94.95 Z" fill="#6b6152" stroke="#6b6152" stroke-width="1" stroke-linejoin="round"/>
<path d="M727,100.5 H731" stroke="#8a7d6a" stroke-width="1.1"/><path d="M727,103.4 H736" stroke="#8a7d6a" stroke-width="1.1"/>
<path d="M730.6,105.5 L729.8,112 M734,105.5 L733.2,112 M728.3,107.6 H735.8 M728,110 H735.5" stroke="#4e9bd6" stroke-width="1.15"/>
<path d="M845.5,102.4 H851.5 L848.5,105.6 Z" fill="#555"/>
<rect x="865" y="65" width="1" height="54" fill="#dcdcdc"/>
<path d="M491.0,136.1 H498.0 L494.5,139.9 Z" fill="#666"/></svg>
<svg class="a" style="left:0;top:163px" width="890" height="415" viewBox="0 163 890 415">
<defs>
<pattern id="tex" x="0" y="0" width="5" height="5" patternUnits="userSpaceOnUse">
 <rect width="5" height="5" fill="#a2a2a2"/>
 <circle cx="2.5" cy="2.5" r="1.25" fill="#b0b1b1"/>
 <circle cx="0" cy="0" r="1.25" fill="#b0b1b1"/><circle cx="5" cy="0" r="1.25" fill="#b0b1b1"/><circle cx="0" cy="5" r="1.25" fill="#b0b1b1"/><circle cx="5" cy="5" r="1.25" fill="#b0b1b1"/>
</pattern>
<pattern id="tex2" x="0" y="0" width="5" height="5" patternUnits="userSpaceOnUse">
 <rect width="5" height="5" fill="#4f4f4f"/>
 <circle cx="2.5" cy="2.5" r="1.2" fill="#595959"/>
 <circle cx="0" cy="0" r="1.2" fill="#595959"/><circle cx="5" cy="0" r="1.2" fill="#595959"/><circle cx="0" cy="5" r="1.2" fill="#595959"/><circle cx="5" cy="5" r="1.2" fill="#595959"/>
</pattern>
<linearGradient id="vigL" x1="0" x2="1" y1="0" y2="0"><stop offset="0" stop-color="#000" stop-opacity="0.35"/><stop offset="1" stop-color="#000" stop-opacity="0"/></linearGradient>
<linearGradient id="vigT" x1="0" x2="0" y1="0" y2="1"><stop offset="0" stop-color="#000" stop-opacity="0.4"/><stop offset="1" stop-color="#000" stop-opacity="0"/></linearGradient>
<linearGradient id="tabg" x1="0" x2="0" y1="0" y2="1"><stop offset="0" stop-color="#fcefc9"/><stop offset="0.55" stop-color="#fbe29b"/><stop offset="1" stop-color="#fde88f"/></linearGradient>
<linearGradient id="scrollg" x1="0" x2="1" y1="0" y2="0"><stop offset="0" stop-color="#cdcdcd"/><stop offset="0.35" stop-color="#ececec"/><stop offset="1" stop-color="#d6d6d6"/></linearGradient>
<filter id="blur2" x="-10%" y="-10%" width="120%" height="120%"><feGaussianBlur stdDeviation="2.5"/></filter>
<clipPath id="pageclip"><rect x="205" y="194" width="465" height="384"/></clipPath>
<clipPath id="docclip"><rect x="3" y="189" width="870" height="389"/></clipPath>
</defs>
<rect x="0" y="163" width="890" height="24" fill="url(#tex2)"/>
<rect x="0" y="163" width="890" height="1" fill="#3c3c3c"/>
<rect x="98" y="166.5" width="792" height="20" fill="none" stroke="#3d3d3d" stroke-width="1"/>
<path d="M1,187 V164.2 H95.5 Q98,164.2 98,166.7 V187 Z" fill="url(#tabg)"/>
<path d="M86,169 L93,176 M93,169 L86,176" stroke="#111" stroke-width="1.2"/>
<path d="M103,176 H113 M108,171 V181" stroke="#fff" stroke-width="2.2"/>
<rect x="117.5" y="166.5" width="1" height="20" fill="#3a3a3a"/>
<rect x="98" y="186" width="792" height="1" fill="#3a3a3a"/>
<rect x="0" y="187" width="890" height="2" fill="#fbe38e"/>
<rect x="1" y="164" width="2" height="414" fill="#fde9a0"/>
<rect x="886" y="187" width="3" height="391" fill="#fde9a0"/>
<rect x="3" y="189" width="870" height="389" fill="url(#tex)"/>
<g clip-path="url(#docclip)">
<rect x="3" y="189" width="10" height="389" fill="url(#vigL)"/>
<rect x="3" y="189" width="870" height="14" fill="url(#vigT)"/>
<rect x="3" y="189" width="870" height="2" fill="#000" opacity="0.35"/>
<rect x="3" y="189" width="2" height="389" fill="#000" opacity="0.3"/>
<rect x="869" y="189" width="4" height="389" fill="url(#vigL)" opacity="0.6" transform="rotate(180 871 383.5)"/>
<rect x="201" y="190" width="473" height="400" fill="#000" opacity="0.55" filter="url(#blur2)"/>
<rect x="204" y="193" width="467" height="390" fill="#2a2a2a"/>
<rect x="205" y="194" width="465" height="390" fill="#fff"/>
</g>
<rect x="3" y="577" width="870" height="1" fill="#3a3a3a" opacity="0.6"/>
<rect x="873" y="189" width="13" height="389" fill="url(#scrollg)"/>
<rect x="873" y="189" width="1" height="389" fill="#9a9a9a"/>
<rect x="873.5" y="564" width="12.5" height="13.5" rx="1.5" fill="#fafafa" stroke="#cfcfcf" stroke-width="1"/>
<path d="M876.5,568.5 H883 L879.75,572 Z" fill="#6a6a6a"/>
<g clip-path="url(#pageclip)">
<defs><pattern id="speck" x="0" y="0" width="16" height="16" patternUnits="userSpaceOnUse"><rect width="16" height="16" fill="#f2f2f2"/><ellipse cx="5.2" cy="2.4" rx="1.2" ry="0.6" fill="#111" transform="rotate(137 5.2 2.4)"/><ellipse cx="1.5" cy="9.3" rx="1.4" ry="0.9" fill="#111" transform="rotate(22 1.5 9.3)"/><ellipse cx="6.9" cy="1.1" rx="0.7" ry="0.5" fill="#111" transform="rotate(144 6.9 1.1)"/><ellipse cx="2.0" cy="3.6" rx="1.2" ry="1.1" fill="#111" transform="rotate(147 2.0 3.6)"/><ellipse cx="9.4" cy="0.8" rx="0.8" ry="0.6" fill="#111" transform="rotate(34 9.4 0.8)"/><ellipse cx="4.6" cy="2.3" rx="0.7" ry="0.5" fill="#111" transform="rotate(174 4.6 2.3)"/><ellipse cx="2.9" cy="9.3" rx="1.2" ry="0.8" fill="#111" transform="rotate(140 2.9 9.3)"/><ellipse cx="11.4" cy="9.0" rx="1.2" ry="0.9" fill="#111" transform="rotate(136 11.4 9.0)"/><ellipse cx="6.8" cy="5.0" rx="1.1" ry="0.8" fill="#111" transform="rotate(76 6.8 5.0)"/><ellipse cx="4.0" cy="2.9" rx="1.3" ry="0.7" fill="#111" transform="rotate(76 4.0 2.9)"/><ellipse cx="8.4" cy="14.0" rx="1.3" ry="0.8" fill="#111" transform="rotate(18 8.4 14.0)"/><ellipse cx="1.9" cy="6.7" rx="1.3" ry="0.7" fill="#111" transform="rotate(125 1.9 6.7)"/><ellipse cx="6.7" cy="15.4" rx="0.7" ry="0.5" fill="#111" transform="rotate(80 6.7 15.4)"/><ellipse cx="5.4" cy="5.6" rx="1.0" ry="0.9" fill="#111" transform="rotate(17 5.4 5.6)"/><ellipse cx="13.4" cy="15.1" rx="1.0" ry="0.9" fill="#111" transform="rotate(15 13.4 15.1)"/><ellipse cx="11.7" cy="5.0" rx="1.1" ry="0.9" fill="#111" transform="rotate(114 11.7 5.0)"/><ellipse cx="4.6" cy="6.2" rx="1.2" ry="0.6" fill="#111" transform="rotate(118 4.6 6.2)"/><ellipse cx="5.7" cy="9.8" rx="1.0" ry="0.6" fill="#111" transform="rotate(73 5.7 9.8)"/><ellipse cx="2.1" cy="4.0" rx="1.0" ry="0.9" fill="#111" transform="rotate(20 2.1 4.0)"/><ellipse cx="2.7" cy="6.4" rx="0.9" ry="0.5" fill="#111" transform="rotate(110 2.7 6.4)"/><ellipse cx="13.8" cy="4.5" rx="1.0" ry="0.7" fill="#111" transform="rotate(97 13.8 4.5)"/><ellipse cx="15.3" cy="2.4" rx="0.8" ry="0.5" fill="#111" transform="rotate(59 15.3 2.4)"/><ellipse cx="0.2" cy="13.3" rx="0.8" ry="0.5" fill="#111" transform="rotate(37 0.2 13.3)"/><ellipse cx="6.7" cy="5.9" rx="1.1" ry="1.1" fill="#111" transform="rotate(176 6.7 5.9)"/><ellipse cx="13.7" cy="15.2" rx="1.2" ry="1.0" fill="#111" transform="rotate(116 13.7 15.2)"/><ellipse cx="14.4" cy="12.5" rx="1.4" ry="1.2" fill="#111" transform="rotate(100 14.4 12.5)"/><ellipse cx="6.4" cy="6.3" rx="1.0" ry="0.7" fill="#111" transform="rotate(48 6.4 6.3)"/><ellipse cx="1.1" cy="3.3" rx="0.7" ry="0.5" fill="#111" transform="rotate(13 1.1 3.3)"/><ellipse cx="1.6" cy="9.1" rx="1.1" ry="1.1" fill="#111" transform="rotate(157 1.6 9.1)"/><ellipse cx="0.4" cy="14.0" rx="1.2" ry="0.7" fill="#111" transform="rotate(64 0.4 14.0)"/><ellipse cx="15.3" cy="9.6" rx="1.0" ry="0.6" fill="#111" transform="rotate(124 15.3 9.6)"/><ellipse cx="15.9" cy="7.5" rx="1.0" ry="0.6" fill="#111" transform="rotate(26 15.9 7.5)"/><ellipse cx="12.0" cy="11.8" rx="1.0" ry="0.9" fill="#111" transform="rotate(132 12.0 11.8)"/><ellipse cx="0.4" cy="15.2" rx="1.1" ry="0.6" fill="#111" transform="rotate(139 0.4 15.2)"/><ellipse cx="14.6" cy="12.1" rx="0.9" ry="0.7" fill="#111" transform="rotate(23 14.6 12.1)"/><ellipse cx="11.1" cy="4.2" rx="0.9" ry="0.5" fill="#111" transform="rotate(57 11.1 4.2)"/><ellipse cx="8.5" cy="12.5" rx="0.9" ry="0.5" fill="#111" transform="rotate(49 8.5 12.5)"/><ellipse cx="12.9" cy="13.1" rx="1.3" ry="0.8" fill="#111" transform="rotate(132 12.9 13.1)"/><ellipse cx="7.9" cy="11.7" rx="1.5" ry="1.3" fill="#111" transform="rotate(120 7.9 11.7)"/><ellipse cx="4.1" cy="11.1" rx="1.5" ry="1.1" fill="#111" transform="rotate(89 4.1 11.1)"/></pattern></defs>
<path d="M607.0,242.5 A292.5,292.5 0 0 0 324.5,610.7" fill="none" stroke="url(#speck)" stroke-width="10.5" />
<path d="M647.4,239.8 A298,298 0 0 0 319.2,612.1" fill="none" stroke="#111" stroke-width="1.8" />
<path d="M649.5,250.7 A287.5,287.5 0 0 0 329.3,609.4" fill="none" stroke="#111" stroke-width="1.8" />
<path d="M607.0,253.0 A282,282 0 0 0 344.6,431.6" fill="none" stroke="#111" stroke-width="1.1" />
<path d="M607.0,277.0 A258,258 0 0 0 357.8,601.8" fill="none" stroke="#111" stroke-width="1.7" />
<path d="M320.3,429.5 A305.5,305.5 0 0 0 311.9,614.1" fill="none" stroke="#111" stroke-width="1.3" />
<path d="M320.3,430.5 L325.5,431.5" stroke="#111" stroke-width="1.3"/>
<path d="M325.5,434.3 H607" stroke="#111" stroke-width="2.2"/>
<path d="M330.5,450.5 H607" stroke="#111" stroke-width="1.9"/>
<path d="M447,247.2 H607" stroke="#222" stroke-width="1.2"/>
<path d="M318,541.1 H607" stroke="#111" stroke-width="1.9"/>
<path d="M294,434.6 H315" stroke="#111" stroke-width="1.3"/><path d="M299.3,421.5 V434.5" stroke="#111" stroke-width="1.3"/><path d="M297,433 L301.5,433" stroke="#111" stroke-width="2"/>
<rect x="336.5" y="433.5" width="5" height="17" fill="#111"/>
<path d="M326,442 H337 M326,442 V450 M330,436 V450" stroke="#222" stroke-width="1"/>
<path d="M341,436 L365,446.4" stroke="#111" stroke-width="1.4"/><circle cx="365" cy="446.4" r="1.6" fill="#111"/>
<path d="M323.4,410 L333,424" stroke="#111" stroke-width="1.2"/>
<path d="M449,247 V600" stroke="#2a2a2a" stroke-width="1.6"/>
<path d="M438,408 V600" stroke="#c4c4c4" stroke-width="0.9"/>
<path d="M607,227 V283 M607,290 V298" stroke="#111" stroke-width="1.6"/>
<path d="M607,306 V600" stroke="#111" stroke-width="1.6" stroke-dasharray="20 5.5 9 5"/>
<circle cx="607" cy="277.4" r="1.5" fill="#111"/>
<circle cx="449" cy="434.2" r="1.5" fill="#111"/>
<circle cx="449" cy="450.8" r="1.5" fill="#111"/>
<circle cx="607" cy="541.1" r="1.5" fill="#111"/>
<circle cx="447" cy="247.2" r="1.5" fill="#111"/>
<rect x="245.5" y="393.5" width="58.69999999999999" height="22.899999999999977" rx="2" fill="#fff" stroke="#d6d6d6" stroke-width="0.9"/><text x="248.0" y="398.7" font-size="3.9" font-family="Liberation Sans" fill="#222">1-3/4"x1-1/2" TOP SILL (CURVED</text><text x="248.0" y="403.5" font-size="3.9" font-family="Liberation Sans" fill="#222">LENGTH, CUT ANCHOR</text><text x="248.0" y="408.3" font-size="3.9" font-family="Liberation Sans" fill="#222">BOLTS SHORT INTO STONE</text><text x="248.0" y="413.09999999999997" font-size="3.9" font-family="Liberation Sans" fill="#222">CORBEL</text>
<rect x="245.5" y="418.4" width="28.30000000000001" height="7.7000000000000455" rx="2" fill="#fff" stroke="#d6d6d6" stroke-width="0.9"/><text x="259.65" y="423.654" text-anchor="middle" font-size="3.9" font-family="Liberation Sans" fill="#222">POUR JOINT</text>
<path d="M304,397.5 H317.5 L333,433 M274,421.5 H299.5" fill="none" stroke="#222" stroke-width="1.1"/>
<rect x="402" y="393" width="32" height="10.5" rx="2" fill="#fff" stroke="#d6d6d6" stroke-width="0.9"/><text x="418.0" y="399.654" text-anchor="middle" font-size="3.9" font-family="Liberation Sans" fill="#222">FORM SET A1</text>
<path d="M402,398 L391.5,393.5 L373.5,380" fill="none" stroke="#222" stroke-width="1.1"/>
<rect x="510" y="410.3" width="66.60000000000002" height="17.69999999999999" rx="2" fill="#fff" stroke="#d6d6d6" stroke-width="0.9"/><text x="512.5" y="415.5" font-size="3.6" font-family="Liberation Sans" fill="#222">SEE GEN.EXP.PVMNT.DTL</text><text x="512.5" y="420.3" font-size="3.6" font-family="Liberation Sans" fill="#222">RAISED STONE SILL 1/2" TOP CONC.</text><text x="512.5" y="425.1" font-size="3.6" font-family="Liberation Sans" fill="#222">JOINT SEE 3/8" SLAB FINISH</text>
<path d="M510,414 H504 L501.5,434" fill="none" stroke="#222" stroke-width="1.1"/>
<rect x="236" y="505" width="30" height="9.5" rx="2" fill="#fff" stroke="#d6d6d6" stroke-width="0.9"/><text x="251.0" y="511.154" text-anchor="middle" font-size="3.9" font-family="Liberation Sans" fill="#222">FORM SET A1</text>
<path d="M266,509.5 L300,516.5" fill="none" stroke="#222" stroke-width="1.1"/>
<rect x="517.7" y="351.6" width="44.0" height="12.699999999999989" rx="2" fill="#fff" stroke="#d4d4d4" stroke-width="1.3"/><text x="539.7" y="360.326" text-anchor="middle" font-size="6.6" font-family="Liberation Sans" fill="#555">BEDROOMS</text>
<rect x="517.5" y="494.3" width="51.0" height="12.099999999999966" rx="2" fill="#fff" stroke="#d4d4d4" stroke-width="1.3"/><text x="543.0" y="502.726" text-anchor="middle" font-size="6.6" font-family="Liberation Sans" fill="#555">LIVING ROOM</text>
<rect x="451" y="531.6" width="36" height="8.199999999999932" rx="2" fill="#fff" stroke="#d6d6d6" stroke-width="0.9"/><text x="469.0" y="537.1400000000001" text-anchor="middle" font-size="4" font-family="Liberation Sans" fill="#666">10'-0" RADIUS</text>
<rect x="510.2" y="571.7" width="66.50000000000006" height="18.299999999999955" rx="2" fill="#fff" stroke="#d6d6d6" stroke-width="0.9"/><text x="512.7" y="576.9000000000001" font-size="3.6" font-family="Liberation Sans" fill="#222">SEE GEN.EXP.PVMNT.DTL</text><text x="512.7" y="581.7" font-size="3.6" font-family="Liberation Sans" fill="#222"></text>
<path d="M503,576 H510" stroke="#111" stroke-width="2"/>
<g transform="rotate(-90 444.5 348.2)"><rect x="431.5" y="344.2" width="26" height="8" rx="2" fill="#fff" stroke="#d0d0d0" stroke-width="0.9"/><text x="444.5" y="349.59999999999997" font-size="3.8" text-anchor="middle" font-family="Liberation Sans" fill="#777">11'-7 3/4"</text></g>
<g transform="rotate(-90 441.8 415.5)"><rect x="434.8" y="411.5" width="14" height="8" rx="2" fill="#fff" stroke="#d0d0d0" stroke-width="0.9"/><text x="441.8" y="416.9" font-size="3.8" text-anchor="middle" font-family="Liberation Sans" fill="#777">1/2"</text></g>
<g transform="rotate(-90 442.5 443)"><text x="442.5" y="444.4" font-size="3.8" text-anchor="middle" font-family="Liberation Sans" fill="#777">1'-0"</text></g>
<g transform="rotate(-90 443 522)"><text x="443" y="523.4" font-size="3.8" text-anchor="middle" font-family="Liberation Sans" fill="#777">8'-10 1/4"</text></g>
<g transform="rotate(-90 345.3 512.3)"><rect x="335.55" y="508.54999999999995" width="19.5" height="7.5" rx="2" fill="#fff" stroke="#d0d0d0" stroke-width="0.9"/><text x="345.3" y="513.6999999999999" font-size="3.8" text-anchor="middle" font-family="Liberation Sans" fill="#777">5'-8"</text></g>
<g transform="rotate(-30 462 316.5)"><rect x="450.5" y="312.5" width="23" height="8" rx="2" fill="#fff" stroke="#d0d0d0" stroke-width="0.9"/><text x="462" y="317.9" font-size="3.8" text-anchor="middle" font-family="Liberation Sans" fill="#777">10'-0 3/4"</text></g>
<path d="M441,423 Q441.5,431 449,434.5" fill="none" stroke="#222" stroke-width="1"/>
<rect x="318.7" y="526.8" width="10.900000000000034" height="8.400000000000091" rx="2" fill="#fff" stroke="#d6d6d6" stroke-width="0.9"/><text x="324.15" y="532.296" text-anchor="middle" font-size="3.6" font-family="Liberation Sans" fill="#444">1"</text>
</g>
</svg>
<svg class="a" style="left:0;top:578px" width="890" height="34" viewBox="0 578 890 34">
<defs><linearGradient id="gsel3" x1="0" y1="0" x2="0" y2="1"><stop offset="0" stop-color="#f7e9c2"/><stop offset="0.5" stop-color="#f3d890"/><stop offset="1" stop-color="#fde9a2"/></linearGradient><linearGradient id="zfill" x1="0" y1="0" x2="1" y2="1"><stop offset="0.5" stop-color="#fff"/><stop offset="0.5" stop-color="#fbe8c4"/></linearGradient></defs>
<rect x="0" y="578" width="890" height="30.5" fill="#f4f4f4"/>
<rect x="0" y="608.3" width="890" height="2.7" fill="#fde9a0"/>
<rect x="1" y="578" width="2" height="31" fill="#fde9a0"/>
<rect x="886" y="578" width="3" height="31" fill="#fde9a0"/>
<rect x="5.0" y="582.0" width="1" height="1" fill="#c4c4c4"/><rect x="7.5" y="582.0" width="1" height="1" fill="#c4c4c4"/><rect x="10.0" y="582.0" width="1" height="1" fill="#c4c4c4"/><rect x="5.0" y="584.5" width="1" height="1" fill="#c4c4c4"/><rect x="7.5" y="584.5" width="1" height="1" fill="#c4c4c4"/><rect x="10.0" y="584.5" width="1" height="1" fill="#c4c4c4"/><rect x="5.0" y="587.0" width="1" height="1" fill="#c4c4c4"/><rect x="7.5" y="587.0" width="1" height="1" fill="#c4c4c4"/><rect x="10.0" y="587.0" width="1" height="1" fill="#c4c4c4"/><rect x="5.0" y="589.5" width="1" height="1" fill="#c4c4c4"/><rect x="7.5" y="589.5" width="1" height="1" fill="#c4c4c4"/><rect x="10.0" y="589.5" width="1" height="1" fill="#c4c4c4"/><rect x="5.0" y="592.0" width="1" height="1" fill="#c4c4c4"/><rect x="7.5" y="592.0" width="1" height="1" fill="#c4c4c4"/><rect x="10.0" y="592.0" width="1" height="1" fill="#c4c4c4"/><rect x="5.0" y="594.5" width="1" height="1" fill="#c4c4c4"/><rect x="7.5" y="594.5" width="1" height="1" fill="#c4c4c4"/><rect x="10.0" y="594.5" width="1" height="1" fill="#c4c4c4"/>
<path d="M5.5,599.5 V605.5" stroke="#777" stroke-width="1"/><path d="M11,599.5 V605.5 L7,602.5 Z" fill="#8a8a8a"/>
<g transform="translate(22.2,589)" fill="#8a8272"><rect x="-1.4" y="-7.0" width="2.8" height="3" transform="rotate(0)"/><rect x="-1.4" y="-7.0" width="2.8" height="3" transform="rotate(45)"/><rect x="-1.4" y="-7.0" width="2.8" height="3" transform="rotate(90)"/><rect x="-1.4" y="-7.0" width="2.8" height="3" transform="rotate(135)"/><rect x="-1.4" y="-7.0" width="2.8" height="3" transform="rotate(180)"/><rect x="-1.4" y="-7.0" width="2.8" height="3" transform="rotate(225)"/><rect x="-1.4" y="-7.0" width="2.8" height="3" transform="rotate(270)"/><rect x="-1.4" y="-7.0" width="2.8" height="3" transform="rotate(315)"/><circle r="5.0"/><circle r="2.2680000000000002" fill="#f4f4f4"/></g>
<g transform="translate(31.3,598.3)" fill="#f8a928"><rect x="-1.4" y="-7.199999999999999" width="2.8" height="3" transform="rotate(0)"/><rect x="-1.4" y="-7.199999999999999" width="2.8" height="3" transform="rotate(45)"/><rect x="-1.4" y="-7.199999999999999" width="2.8" height="3" transform="rotate(90)"/><rect x="-1.4" y="-7.199999999999999" width="2.8" height="3" transform="rotate(135)"/><rect x="-1.4" y="-7.199999999999999" width="2.8" height="3" transform="rotate(180)"/><rect x="-1.4" y="-7.199999999999999" width="2.8" height="3" transform="rotate(225)"/><rect x="-1.4" y="-7.199999999999999" width="2.8" height="3" transform="rotate(270)"/><rect x="-1.4" y="-7.199999999999999" width="2.8" height="3" transform="rotate(315)"/><circle r="5.199999999999999"/><circle r="2.352" fill="#fbfbfb"/></g>
<path d="M44.7,592.0 H50.7 L47.7,595.2 Z" fill="#333"/>
<rect x="56" y="582" width="1" height="23" fill="#dadada"/>
<path d="M62.8,588 L66.3,591.5 L69.8,588 M62.8,593 L66.3,596.5 L69.8,593" fill="none" stroke="#5a5a5a" stroke-width="1.8"/>
<rect x="233.0" y="582.0" width="1" height="1" fill="#c4c4c4"/><rect x="235.5" y="582.0" width="1" height="1" fill="#c4c4c4"/><rect x="238.0" y="582.0" width="1" height="1" fill="#c4c4c4"/><rect x="233.0" y="584.5" width="1" height="1" fill="#c4c4c4"/><rect x="235.5" y="584.5" width="1" height="1" fill="#c4c4c4"/><rect x="238.0" y="584.5" width="1" height="1" fill="#c4c4c4"/><rect x="233.0" y="587.0" width="1" height="1" fill="#c4c4c4"/><rect x="235.5" y="587.0" width="1" height="1" fill="#c4c4c4"/><rect x="238.0" y="587.0" width="1" height="1" fill="#c4c4c4"/><rect x="233.0" y="589.5" width="1" height="1" fill="#c4c4c4"/><rect x="235.5" y="589.5" width="1" height="1" fill="#c4c4c4"/><rect x="238.0" y="589.5" width="1" height="1" fill="#c4c4c4"/><rect x="233.0" y="592.0" width="1" height="1" fill="#c4c4c4"/><rect x="235.5" y="592.0" width="1" height="1" fill="#c4c4c4"/><rect x="238.0" y="592.0" width="1" height="1" fill="#c4c4c4"/><rect x="233.0" y="594.5" width="1" height="1" fill="#c4c4c4"/><rect x="235.5" y="594.5" width="1" height="1" fill="#c4c4c4"/><rect x="238.0" y="594.5" width="1" height="1" fill="#c4c4c4"/>
<path d="M233.5,599.5 V605.5" stroke="#777" stroke-width="1"/><path d="M239,599.5 V605.5 L235,602.5 Z" fill="#8a8a8a"/>
<circle cx="255.1" cy="594.2" r="10.2" fill="#f8f8f8" stroke="#c9c2b6" stroke-width="1.3"/>
<path d="M251,589 V599.4" stroke="#a9cbe6" stroke-width="1.8"/><path d="M259.5,589.3 L254.3,594.2 L259.5,599.1" fill="none" stroke="#a9cbe6" stroke-width="2"/>
<circle cx="283" cy="594.2" r="10.2" fill="#f8f8f8" stroke="#c9c2b6" stroke-width="1.3"/>
<path d="M285,589.3 L280.3,594.2 L285,599.1" fill="none" stroke="#a9cbe6" stroke-width="2"/>
<rect x="299" y="582.8" width="88" height="21.5" rx="3" fill="#fff" stroke="#8f8f8f" stroke-width="1"/>
<circle cx="403" cy="594.2" r="10.2" fill="#f8f8f8" stroke="#8a7f70" stroke-width="1.3"/>
<path d="M401,589.3 L405.7,594.2 L401,599.1" fill="none" stroke="#4e9bd6" stroke-width="2"/>
<circle cx="430.8" cy="594.2" r="10.2" fill="#f8f8f8" stroke="#8a7f70" stroke-width="1.3"/>
<path d="M426.5,589.3 L431.5,594.2 L426.5,599.1" fill="none" stroke="#4e9bd6" stroke-width="2"/><path d="M435,589 V599.4" stroke="#4e9bd6" stroke-width="1.8"/>
<rect x="448" y="582" width="1" height="23" fill="#dadada"/>
<circle cx="466" cy="594" r="10.2" fill="#f8f8f8" stroke="#8a7f70" stroke-width="1.3"/>
<path d="M460.5,594 H471.5 M465,589.5 L460.5,594 L465,598.5" fill="none" stroke="#78ad2e" stroke-width="2.4" stroke-linecap="round" stroke-linejoin="round"/>
<path d="M483,588 L486.5,591.5 L490,588 M483,593 L486.5,596.5 L490,593" fill="none" stroke="#5a5a5a" stroke-width="1.8"/>
<rect x="494.0" y="582.0" width="1" height="1" fill="#c4c4c4"/><rect x="496.5" y="582.0" width="1" height="1" fill="#c4c4c4"/><rect x="499.0" y="582.0" width="1" height="1" fill="#c4c4c4"/><rect x="494.0" y="584.5" width="1" height="1" fill="#c4c4c4"/><rect x="496.5" y="584.5" width="1" height="1" fill="#c4c4c4"/><rect x="499.0" y="584.5" width="1" height="1" fill="#c4c4c4"/><rect x="494.0" y="587.0" width="1" height="1" fill="#c4c4c4"/><rect x="496.5" y="587.0" width="1" height="1" fill="#c4c4c4"/><rect x="499.0" y="587.0" width="1" height="1" fill="#c4c4c4"/><rect x="494.0" y="589.5" width="1" height="1" fill="#c4c4c4"/><rect x="496.5" y="589.5" width="1" height="1" fill="#c4c4c4"/><rect x="499.0" y="589.5" width="1" height="1" fill="#c4c4c4"/><rect x="494.0" y="592.0" width="1" height="1" fill="#c4c4c4"/><rect x="496.5" y="592.0" width="1" height="1" fill="#c4c4c4"/><rect x="499.0" y="592.0" width="1" height="1" fill="#c4c4c4"/><rect x="494.0" y="594.5" width="1" height="1" fill="#c4c4c4"/><rect x="496.5" y="594.5" width="1" height="1" fill="#c4c4c4"/><rect x="499.0" y="594.5" width="1" height="1" fill="#c4c4c4"/>
<path d="M494.5,599.5 V605.5" stroke="#777" stroke-width="1"/><path d="M500,599.5 V605.5 L496,602.5 Z" fill="#8a8a8a"/>
<path d="M508.7,584 H519 L523.6,589 V602.8 Q523.6,603.5 523,603.5 H509.3 Q508.7,603.5 508.7,603 Z" fill="#fff" stroke="#7d7264" stroke-width="1.2"/><path d="M519,584 L523.6,589 L520,588.5 Z" fill="#6b6152"/>
<rect x="530.5" y="580.5" width="27" height="26.5" rx="2.5" fill="url(#gsel3)" stroke="#c9ad62" stroke-width="1"/>
<path d="M535.5,582.5 V592 H552.5 V582.5" fill="#fff" stroke="#7d7264" stroke-width="1.2"/>
<path d="M535.5,605 V595 H547.5 L552.5,600 V605" fill="#fff" stroke="#7d7264" stroke-width="1.2"/><path d="M547.5,595 L552.5,600 L548.5,599.5 Z" fill="#6b6152"/>
<path d="M560.5,587 H567.5 L571,590.5 V600 H560.5 Z" fill="#fff" stroke="#7d7264" stroke-width="1.1"/><path d="M567.5,587 L571,590.5 L568,590 Z" fill="#6b6152"/>
<path d="M573.5,587 H580.5 L584,590.5 V600 H573.5 Z" fill="#fff" stroke="#7d7264" stroke-width="1.1"/><path d="M580.5,587 L584,590.5 L581,590 Z" fill="#6b6152"/>
<path d="M589,588 L592.5,591.5 L596,588 M589,593 L592.5,596.5 L596,593" fill="none" stroke="#5a5a5a" stroke-width="1.8"/>
<rect x="600.5" y="582.0" width="1" height="1" fill="#c4c4c4"/><rect x="603.0" y="582.0" width="1" height="1" fill="#c4c4c4"/><rect x="605.5" y="582.0" width="1" height="1" fill="#c4c4c4"/><rect x="600.5" y="584.5" width="1" height="1" fill="#c4c4c4"/><rect x="603.0" y="584.5" width="1" height="1" fill="#c4c4c4"/><rect x="605.5" y="584.5" width="1" height="1" fill="#c4c4c4"/><rect x="600.5" y="587.0" width="1" height="1" fill="#c4c4c4"/><rect x="603.0" y="587.0" width="1" height="1" fill="#c4c4c4"/><rect x="605.5" y="587.0" width="1" height="1" fill="#c4c4c4"/><rect x="600.5" y="589.5" width="1" height="1" fill="#c4c4c4"/><rect x="603.0" y="589.5" width="1" height="1" fill="#c4c4c4"/><rect x="605.5" y="589.5" width="1" height="1" fill="#c4c4c4"/><rect x="600.5" y="592.0" width="1" height="1" fill="#c4c4c4"/><rect x="603.0" y="592.0" width="1" height="1" fill="#c4c4c4"/><rect x="605.5" y="592.0" width="1" height="1" fill="#c4c4c4"/><rect x="600.5" y="594.5" width="1" height="1" fill="#c4c4c4"/><rect x="603.0" y="594.5" width="1" height="1" fill="#c4c4c4"/><rect x="605.5" y="594.5" width="1" height="1" fill="#c4c4c4"/>
<path d="M601.0,599.5 V605.5" stroke="#777" stroke-width="1"/><path d="M606.5,599.5 V605.5 L602.5,602.5 Z" fill="#8a8a8a"/>
<rect x="609.5" y="582.5" width="81" height="22" rx="3" fill="#fff" stroke="#9a9a9a" stroke-width="1"/>
<path d="M679.0,590.5 H686.0 L682.5,594.5 Z" fill="#555"/>
<rect x="695" y="582" width="1" height="23" fill="#dadada"/>
<circle cx="713" cy="594" r="10.2" fill="url(#zfill)" stroke="#8a7f70" stroke-width="1.6"/>
<path d="M707,594 H719" stroke="#4e9bd6" stroke-width="1.6"/>
<path d="M729,594.5 H829" stroke="#707070" stroke-width="1"/>
<rect x="775.5" y="582.5" width="6" height="23" rx="2.5" fill="#fafafa" stroke="#6e6e6e" stroke-width="1"/>
<path d="M834.3,588 L837.8,591.5 L841.3,588 M834.3,593 L837.8,596.5 L841.3,593" fill="none" stroke="#5a5a5a" stroke-width="1.8"/>
<rect x="845.5" y="582.0" width="1" height="1" fill="#c4c4c4"/><rect x="848.0" y="582.0" width="1" height="1" fill="#c4c4c4"/><rect x="850.5" y="582.0" width="1" height="1" fill="#c4c4c4"/><rect x="845.5" y="584.5" width="1" height="1" fill="#c4c4c4"/><rect x="848.0" y="584.5" width="1" height="1" fill="#c4c4c4"/><rect x="850.5" y="584.5" width="1" height="1" fill="#c4c4c4"/><rect x="845.5" y="587.0" width="1" height="1" fill="#c4c4c4"/><rect x="848.0" y="587.0" width="1" height="1" fill="#c4c4c4"/><rect x="850.5" y="587.0" width="1" height="1" fill="#c4c4c4"/><rect x="845.5" y="589.5" width="1" height="1" fill="#c4c4c4"/><rect x="848.0" y="589.5" width="1" height="1" fill="#c4c4c4"/><rect x="850.5" y="589.5" width="1" height="1" fill="#c4c4c4"/><rect x="845.5" y="592.0" width="1" height="1" fill="#c4c4c4"/><rect x="848.0" y="592.0" width="1" height="1" fill="#c4c4c4"/><rect x="850.5" y="592.0" width="1" height="1" fill="#c4c4c4"/><rect x="845.5" y="594.5" width="1" height="1" fill="#c4c4c4"/><rect x="848.0" y="594.5" width="1" height="1" fill="#c4c4c4"/><rect x="850.5" y="594.5" width="1" height="1" fill="#c4c4c4"/>
<path d="M846.0,599.5 V605.5" stroke="#777" stroke-width="1"/><path d="M851.5,599.5 V605.5 L847.5,602.5 Z" fill="#8a8a8a"/>
<path d="M867,588 L870.5,591.5 L874,588 M867,593 L870.5,596.5 L874,593" fill="none" stroke="#5a5a5a" stroke-width="1.8"/>
<path d="M878,580.5 H885 L881.5,584 Z" fill="#6a6a6a"/><rect x="878" y="585.5" width="7" height="1" fill="#6a6a6a"/>
<rect x="0" y="611" width="890" height="1" fill="#b4b4b4"/><rect x="0" y="578" width="1" height="34" fill="#b4b4b4"/><rect x="889" y="578" width="1" height="34" fill="#b4b4b4"/>
</svg>
<svg class="a" style="left:360px;top:582px" width="30" height="22" viewBox="360 582 30 22"><path d="M369,589 V598" stroke="#222" stroke-width="1.25"/><path d="M369.4,589.2 L366.6,591.2" stroke="#222" stroke-width="1.1"/><path d="M377.4,587 L372.7,600.6" stroke="#666" stroke-width="1"/><text x="378.8" y="594.6" font-size="9.5" font-family="Liberation Sans" fill="#555">9</text></svg>
<div class="t" style="left:613px;top:587px;font-size:12.5px;color:#111">100%</div>
<div class="a" style="left:0;top:0;width:890px;height:1px;background:#b4b4b4"></div>
<div class="a" style="left:0;top:0;width:1px;height:612px;background:#b4b4b4"></div>
<div class="a" style="left:889px;top:0;width:1px;height:612px;background:#b4b4b4"></div>
<div class="t" style="left:364px;top:9px;letter-spacing:-0.1px">Architecture - PDF-XChang..</div>
<div class="t" style="left:522px;top:9px;color:#8a8a8a;letter-spacing:-0.2px">Quick Launch (CTRL+.)</div>
<div class="t" style="left:19px;top:39px;color:#fff">File</div>
<div class="t" style="left:68px;top:39px;">Home</div>
<div class="t" style="left:119px;top:39px;">View</div>
<div class="t" style="left:162px;top:39px;">Comment</div>
<div class="t" style="left:234px;top:39px;">Protect</div>
<div class="t" style="left:290px;top:39px;">Form</div>
<div class="t" style="left:336px;top:39px;color:#26478c">Organize</div>
<div class="t" style="left:401px;top:39px;">Convert</div>
<div class="t" style="left:461px;top:39px;letter-spacing:-0.3px">Share</div>
<div class="t" style="left:508px;top:39px;letter-spacing:-0.3px">Review</div>
<div class="t" style="left:563px;top:39px;letter-spacing:-0.15px">Bookmarks</div>
<div class="t" style="left:640px;top:39px;">Help</div>
<div class="t" style="left:694px;top:39px;">Format</div>
<div class="t" style="left:790px;top:39px;">Find...</div>
<div class="t" style="left:31px;top:70px;">Hand</div>
<div class="t" style="left:31px;top:98px;letter-spacing:-0.35px">Select Text</div>
<div class="t" style="left:31px;top:126px;letter-spacing:-0.1px">Other Tools</div>
<div class="t" style="left:127px;top:118px;">Insert</div>
<div class="t" style="left:177.5px;top:118px;letter-spacing:-0.3px">Delete</div>
<div class="t" style="left:235.5px;top:118px;letter-spacing:-0.3px">Extract</div>
<div class="t" style="left:237.5px;top:131px;letter-spacing:-0.7px">Pages</div>
<div class="t" style="left:308px;top:70px;letter-spacing:-0.2px">Move Pages</div>
<div class="t" style="left:308px;top:98px;letter-spacing:-0.3px">Merge Pages</div>
<div class="t" style="left:308px;top:126px;">Split</div>
<div class="t" style="left:426.5px;top:118px;letter-spacing:-0.2px">Rotate</div>
<div class="t" style="left:482.5px;top:118px;">Crop</div>
<div class="t" style="left:531.5px;top:118px;letter-spacing:-0.8px">Resize</div>
<div class="t" style="left:585.5px;top:118px;letter-spacing:-0.15px">Watermarks</div>
<div class="t" style="left:652px;top:118px;">Background</div>
<div class="t" style="left:747.5px;top:70px;letter-spacing:-0.15px">Header and Footer</div>
<div class="t" style="left:747.5px;top:98px;letter-spacing:-0.1px">Bates Numbering</div>
<div class="t lbl" style="left:41.5px;top:148px;letter-spacing:-0.1px">Tools</div>
<div class="t lbl" style="left:247.5px;top:148px;letter-spacing:-0.1px">Pages</div>
<div class="t lbl" style="left:453.5px;top:148px;letter-spacing:-0.25px">Transform Pages</div>
<div class="t lbl" style="left:692.5px;top:148px;">Page Marks</div>
<div class="t" style="left:8px;top:169px;letter-spacing:0.2px">Architecture</div>
<svg class="a" style="left:700px;top:112px" width="190" height="140" viewBox="700 112 190 140">
<defs><filter id="msh" x="-10%" y="-10%" width="130%" height="130%"><feGaussianBlur stdDeviation="1.5"/></filter><linearGradient id="hig" x1="0" y1="0" x2="0" y2="1"><stop offset="0" stop-color="#fbf0cf"/><stop offset="0.5" stop-color="#f9e3a0"/><stop offset="1" stop-color="#fdeeb5"/></linearGradient></defs>
<rect x="718" y="119" width="171" height="129" rx="2" fill="#000" opacity="0.35" filter="url(#msh)"/>
<rect x="717.5" y="118" width="171" height="128" rx="2" fill="#f6f6f6" stroke="#7e7e7e" stroke-width="1"/>
<rect x="722.5" y="151.5" width="162.5" height="27" rx="2.5" fill="url(#hig)" stroke="#d9b96a" stroke-width="1"/>
<path d="M739.5,126.3 H750.0 L755.0,132.8 V145.6 Q755.0,146.6 754.0,146.6 H739.5 Q738.5,146.6 738.5,145.6 V127.3 Q738.5,126.3 739.5,126.3 Z" fill="#fff" stroke="#7d7264" stroke-width="1.2"/><path d="M750.0,126.3 L755.0,132.8 Q752.0,131.8 750.0,126.3 Z" fill="#6b6152" stroke="#6b6152" stroke-width="0.8"/><path d="M741.5,131.3 H747.0 M741.5,134.6 H751.5" stroke="#9e8f78" stroke-width="1.1"/><path d="M744.0,136.3 L743.1,142.8 M747.5,136.3 L746.6,142.8 M741.9,138.5 H749.5 M741.5,140.8 H749.1" stroke="#4e9bd6" stroke-width="1.1"/>
<circle cx="754.9" cy="143" r="7" fill="#f6f6f6"/><circle cx="754.9" cy="143" r="6" fill="#7fae38"/><path d="M751.3,143 H758.5 M754.9,139.4 V146.6" stroke="#fff" stroke-width="2.2"/>
<path d="M737,174 V157 Q737,156 738,156 H748" fill="none" stroke="#b3a898" stroke-width="0.9"/>
<path d="M739,175 V159 Q739,158 740,158 H750" fill="none" stroke="#a89c88" stroke-width="0.9"/>
<path d="M741.8,157 H750.3 L754.8,162.85 V174.5 Q754.8,175.5 753.8,175.5 H741.8 Q740.8,175.5 740.8,174.5 V158 Q740.8,157 741.8,157 Z" fill="#fff" stroke="#7d7264" stroke-width="1.2"/><path d="M750.3,157 L754.8,162.85 Q752.0999999999999,161.95 750.3,157 Z" fill="#6b6152" stroke="#6b6152" stroke-width="0.8"/><path d="M743.8,162 H749.3 M743.8,165.3 H751.3" stroke="#9e8f78" stroke-width="1.1"/><path d="M746.3,167 L745.4,173.5 M749.8,167 L748.9,173.5 M744.1999999999999,169.2 H751.8 M743.8,171.5 H751.4" stroke="#4e9bd6" stroke-width="1.1"/>
<circle cx="754.9" cy="171.7" r="7" fill="#f6f6f6"/><circle cx="754.9" cy="171.7" r="6" fill="#7fae38"/><path d="M751.3,171.7 H758.5 M754.9,168.1 V175.29999999999998" stroke="#fff" stroke-width="2.2"/>
<path d="M739.5,182.5 H749.5 L754.5,189.0 V201.5 Q754.5,202.5 753.5,202.5 H739.5 Q738.5,202.5 738.5,201.5 V183.5 Q738.5,182.5 739.5,182.5 Z" fill="#fff" stroke="#7d7264" stroke-width="1.2"/><path d="M749.5,182.5 L754.5,189.0 Q751.5,188.0 749.5,182.5 Z" fill="#6b6152" stroke="#6b6152" stroke-width="0.8"/><path d="M741.5,187.5 H747.0 M741.5,190.8 H751.0" stroke="#9e8f78" stroke-width="1.1"/><path d="M744.0,192.5 L743.1,199.0 M747.5,192.5 L746.6,199.0 M741.9,194.7 H749.5 M741.5,197.0 H749.1" stroke="#4e9bd6" stroke-width="1.1"/>
<rect x="752" y="194.5" width="8.5" height="10" fill="#f06a3a"/><rect x="751.2" y="193.3" width="10" height="1.5" fill="#f06a3a"/><rect x="754.5" y="192" width="3.5" height="1.5" fill="#f06a3a"/><path d="M754.3,196 V203 M756.3,196 V203 M758.3,196 V203" stroke="#fbb08f" stroke-width="0.7"/>
<rect x="723" y="210" width="161" height="1" fill="#dcdcdc"/>
<path d="M739.5,217 H749.5 L754.5,223.5 V236.5 Q754.5,237.5 753.5,237.5 H739.5 Q738.5,237.5 738.5,236.5 V218 Q738.5,217 739.5,217 Z" fill="#fff" stroke="#7d7264" stroke-width="1.2"/><path d="M749.5,217 L754.5,223.5 Q751.5,222.5 749.5,217 Z" fill="#6b6152" stroke="#6b6152" stroke-width="0.8"/><path d="M741.5,222 H747.0 M741.5,225.3 H751.0" stroke="#9e8f78" stroke-width="1.1"/><path d="M744.0,227 L743.1,233.5 M747.5,227 L746.6,233.5 M741.9,229.2 H749.5 M741.5,231.5 H749.1" stroke="#4e9bd6" stroke-width="1.1"/>
<circle cx="754.9" cy="233.6" r="7.5" fill="#f6f6f6"/><g transform="translate(754.9,233.6)" fill="#8a8272"><rect x="-1.3" y="-7" width="2.6" height="3" transform="rotate(0)"/><rect x="-1.3" y="-7" width="2.6" height="3" transform="rotate(45)"/><rect x="-1.3" y="-7" width="2.6" height="3" transform="rotate(90)"/><rect x="-1.3" y="-7" width="2.6" height="3" transform="rotate(135)"/><rect x="-1.3" y="-7" width="2.6" height="3" transform="rotate(180)"/><rect x="-1.3" y="-7" width="2.6" height="3" transform="rotate(225)"/><rect x="-1.3" y="-7" width="2.6" height="3" transform="rotate(270)"/><rect x="-1.3" y="-7" width="2.6" height="3" transform="rotate(315)"/><circle r="5"/><circle r="2.2" fill="#f6f6f6"/></g>
</svg>
<div class="t" style="left:764.5px;top:129.5px">Add...</div>
<div class="t" style="left:764.5px;top:157.5px">Add to Multiple Files...</div>
<div class="t" style="left:764.5px;top:185.5px">Remove All...</div>
<div class="t" style="left:764.5px;top:220.5px">Manage...</div>
</body></html>
